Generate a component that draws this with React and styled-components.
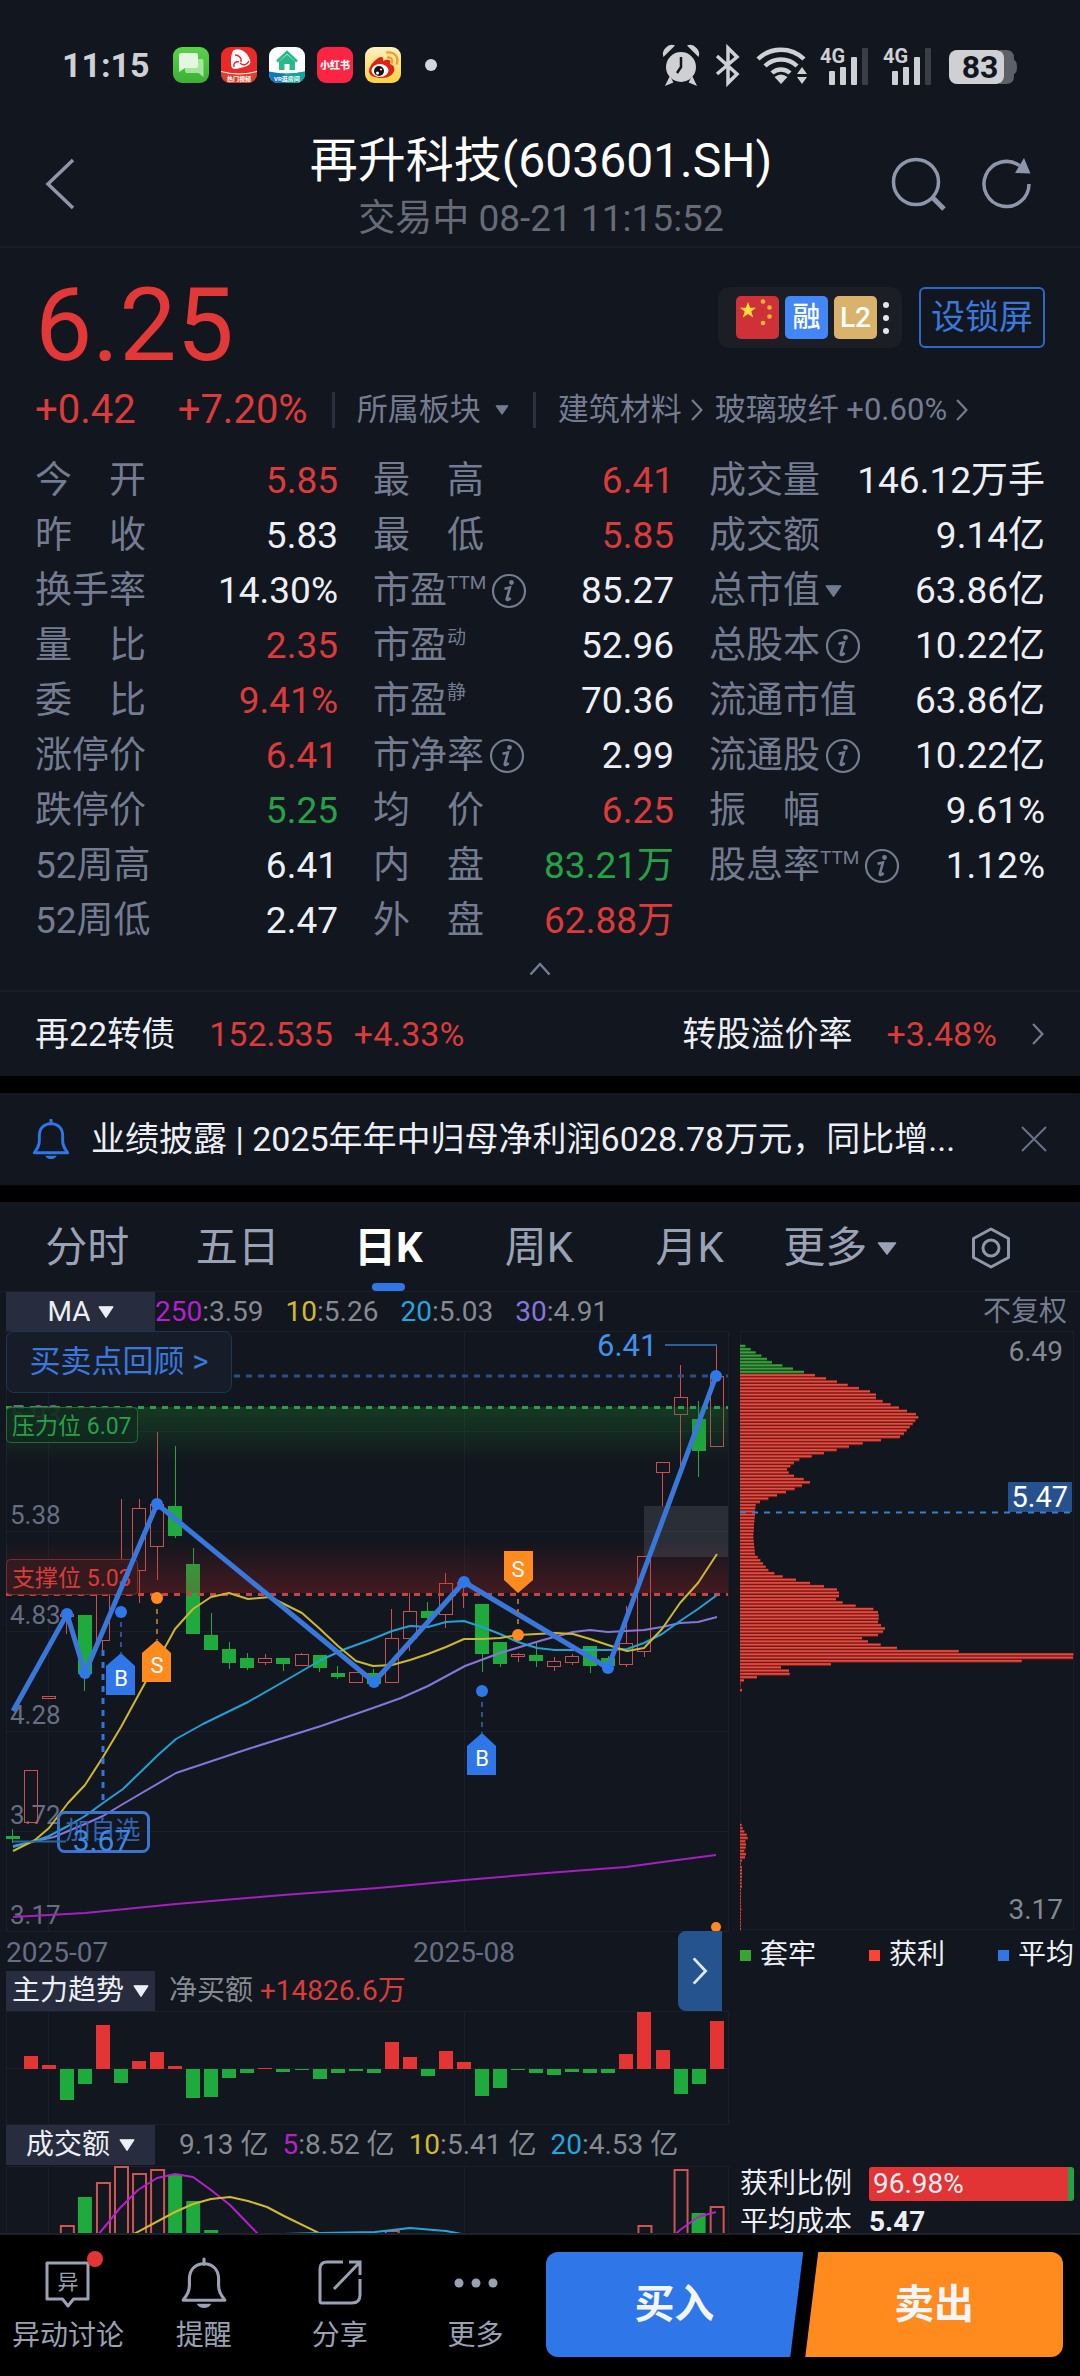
import React from 'react';
import styled, { createGlobalStyle } from 'styled-components';

const red = '#db3b3b';
const green = '#26a146';
const grey = '#737c90';
const white = '#eceff5';
const up = '#c9504f';
const down = '#1faa3e';
const gridLine = '#1b2028';

const GlobalStyle = createGlobalStyle`
    * {
        box-sizing: border-box;
    }
    body {
        margin: 0;
        background: #000000;
        font-family: Roboto, 'Noto Sans CJK SC', sans-serif;
        line-height: 1.2;
        color: ${white};
    }
    button, select {
        margin: 0;
        padding: 0;
        border: 0;
        background: none;
        font: inherit;
        color: inherit;
        cursor: pointer;
    }
    svg {
        display: block;
        flex: none;
    }
    svg text {
        font-family: Roboto, 'Noto Sans CJK SC', sans-serif;
    }
`;

/* ---------- data ---------- */

const quoteColumns = [
    [
        { label: '今　开', value: '5.85', color: red },
        { label: '昨　收', value: '5.83' },
        { label: '换手率', value: '14.30%' },
        { label: '量　比', value: '2.35', color: red },
        { label: '委　比', value: '9.41%', color: red },
        { label: '涨停价', value: '6.41', color: red },
        { label: '跌停价', value: '5.25', color: green },
        { label: '52周高', value: '6.41' },
        { label: '52周低', value: '2.47' },
    ],
    [
        { label: '最　高', value: '6.41', color: red },
        { label: '最　低', value: '5.85', color: red },
        { label: '市盈', sup: 'TTM', info: true, value: '85.27' },
        { label: '市盈', sup: '动', value: '52.96' },
        { label: '市盈', sup: '静', value: '70.36' },
        { label: '市净率', info: true, value: '2.99' },
        { label: '均　价', value: '6.25', color: red },
        { label: '内　盘', value: '83.21万', color: green },
        { label: '外　盘', value: '62.88万', color: red },
    ],
    [
        { label: '成交量', value: '146.12万手' },
        { label: '成交额', value: '9.14亿' },
        { label: '总市值', arrow: true, value: '63.86亿' },
        { label: '总股本', info: true, value: '10.22亿' },
        { label: '流通市值', value: '63.86亿' },
        { label: '流通股', info: true, value: '10.22亿' },
        { label: '振　幅', value: '9.61%' },
        { label: '股息率', sup: 'TTM', info: true, value: '1.12%' },
    ],
];

const averages = [
    { days: '250', value: '3.59', color: '#b51fd0' },
    { days: '10', value: '5.26', color: '#d2bb2a' },
    { days: '20', value: '5.03', color: '#25a5df' },
    { days: '30', value: '4.91', color: '#8576dd' },
];

const amounts = [
    { days: '5', value: '8.52 亿', color: '#b51fd0' },
    { days: '10', value: '5.41 亿', color: '#d2bb2a' },
    { days: '20', value: '4.53 亿', color: '#25a5df' },
];

// [day, rising, body top, body bottom, high, low]
const candles = [
    [0, 0, 1836, 1838, 1829, 1843],
    [1, 1, 1770, 1822, 1770, 1822],
    [2, 1, 1696, 1698, 1696, 1698],
    [3, 1, 1614, 1616, 1612, 1634],
    [4, 0, 1615, 1673, 1615, 1691],
    [5, 1, 1574, 1640, 1574, 1655],
    [6, 1, 1562, 1590, 1499, 1590],
    [7, 1, 1508, 1570, 1499, 1603],
    [8, 1, 1504, 1546, 1432, 1580],
    [9, 0, 1506, 1535, 1446, 1538],
    [10, 0, 1564, 1633, 1548, 1633],
    [11, 0, 1635, 1649, 1613, 1649],
    [12, 0, 1649, 1662, 1642, 1669],
    [13, 0, 1658, 1667, 1653, 1670],
    [14, 1, 1658, 1662, 1654, 1665],
    [15, 0, 1658, 1663, 1658, 1671],
    [16, 1, 1654, 1665, 1653, 1665],
    [17, 0, 1655, 1667, 1655, 1672],
    [18, 0, 1673, 1676, 1666, 1679],
    [19, 1, 1672, 1682, 1672, 1682],
    [20, 0, 1673, 1683, 1669, 1683],
    [21, 1, 1638, 1682, 1609, 1682],
    [22, 1, 1611, 1638, 1593, 1651],
    [23, 0, 1611, 1617, 1602, 1622],
    [24, 1, 1583, 1614, 1573, 1628],
    [25, 1, 1582, 1584, 1580, 1608],
    [26, 0, 1604, 1653, 1604, 1672],
    [27, 0, 1642, 1663, 1642, 1667],
    [28, 1, 1654, 1656, 1653, 1662],
    [29, 0, 1655, 1660, 1642, 1667],
    [30, 1, 1661, 1666, 1657, 1671],
    [31, 1, 1656, 1662, 1654, 1665],
    [32, 0, 1646, 1665, 1646, 1673],
    [33, 0, 1658, 1665, 1656, 1668],
    [34, 1, 1643, 1664, 1606, 1667],
    [35, 1, 1556, 1651, 1556, 1657],
    [36, 1, 1462, 1472, 1462, 1506],
    [37, 1, 1397, 1414, 1365, 1468],
    [38, 0, 1419, 1450, 1401, 1477],
    [39, 1, 1376, 1446, 1345, 1446],
];

const lines = {
    ma10: '13,1851 35,1840 49,1828 68,1803 85,1785 103,1757 121,1727 145,1683 169,1640 175,1629 193,1609 211,1597 229,1593 248,1599 270,1597 302,1613 320,1629 338,1646 356,1661 373,1666 392,1665 410,1660 428,1654 446,1647 464,1639 482,1639 500,1638 518,1635 537,1634 555,1633 573,1634 590,1639 608,1645 627,1651 644,1648 662,1629 680,1603 698,1583 717,1554',
    ma20: '13,1847 35,1841 49,1836 68,1826 85,1816 103,1803 123,1789 158,1755 176,1739 203,1724 248,1702 283,1682 302,1671 321,1660 345,1649 370,1640 392,1631 410,1626 428,1627 446,1622 464,1621 482,1627 500,1634 518,1642 537,1648 555,1650 610,1650 627,1649 644,1643 662,1634 680,1621 698,1609 717,1595',
    ma30: '13,1846 54,1837 85,1824 103,1816 123,1804 176,1773 248,1749 321,1726 373,1708 401,1698 428,1686 465,1666 500,1653 543,1640 573,1632 590,1630 608,1632 644,1630 662,1627 680,1623 698,1622 717,1617',
    ma250: '13,1917 49,1915 85,1913 176,1904 283,1895 378,1888 465,1880 547,1873 626,1867 670,1861 716,1855',
    zigzag: '13,1711 67,1614 85,1673 157,1504 374,1682 464,1582 608,1668 716,1376',
};

const pivots = [[67, 1614], [85, 1673], [157, 1504], [374, 1682], [464, 1582], [608, 1668], [716, 1376]];

const trend = [
    0, 13, 4, -31, -15, 44, -14, 8, 17, 3, -29, -28, -9, -4, 1, -3, -1, -10, -4, -2,
    -4, 27, 12, -7, 18, 7, -27, -19, -1, -4, -6, -3, -4, -4, 15, 57, 19, -25, -15, 48,
];

// [day, rising, top]
const volumes = [
    [3, 1, 2226], [4, 0, 2197], [5, 1, 2183], [6, 1, 2167], [7, 1, 2174], [8, 1, 2170], [9, 0, 2175],
    [10, 0, 2201], [11, 0, 2230], [21, 1, 2231], [34, 1, 2234], [35, 1, 2226], [37, 1, 2170], [38, 0, 2213], [39, 1, 2207],
];

// widths of the cost distribution, in thirds of a unit
const chips = [
    16, 32, 47, 64, 81, 96, 127, 159, 192, 225, 258, 291, 323, 357, 390, 408, 408, 428, 452, 477,
    501, 528, 535, 526, 518, 509, 500, 492, 480, 423, 368, 327, 290, 252, 215, 178, 162, 151, 141, 146,
    162, 191, 210, 186, 164, 138, 111, 85, 60, 47, 46, 45, 45, 44, 43, 42, 42, 41, 40, 40,
    41, 42, 43, 44, 45, 53, 61, 69, 77, 85, 103, 128, 168, 210, 252, 291, 297, 297, 288, 308,
    347, 400, 414, 416, 416, 414, 423, 435, 429, 414, 366, 384, 422, 471, 656, 1000, 999, 845, 273, 123,
    147, 149, 51, 12, 2, 1, 6,
];

const lowChips = [
    5, 8, 13, 20, 23, 16, 18, 17, 13, 18, 15, 6, 3, 6, 6, 6, 6, 5, 5, 6, 3, 3, 3, 3, 3, 3, 4, 3, 3, 3, 3, 3, 3,
];

const dayX = (day) => 12.7 + day * 18.05;

/* ---------- icons ---------- */

const Triangle = ({ width = 15, height = 11, color = 'currentColor' }) => (
    <svg width={width} height={height} viewBox="0 0 15 11" preserveAspectRatio="none">
        <path d="M1 0.8h13L7.5 10.4z" fill={color} stroke={color} strokeWidth="1" strokeLinejoin="round" />
    </svg>
);

const ChevronRight = ({ width = 12, height = 20, stroke = 2, color = 'currentColor' }) => (
    <svg width={width} height={height} viewBox="0 0 12 20" fill="none" stroke={color} strokeWidth={stroke}>
        <path d="M1.5 1l8.5 9-8.5 9" />
    </svg>
);

const InfoIcon = () => (
    <svg width="36" height="36" viewBox="0 0 36 36" fill="none" stroke={grey} strokeWidth="2.2">
        <circle cx="18" cy="18" r="16" />
        <circle cx="20.5" cy="9.5" r="2.4" fill={grey} stroke="none" />
        <path d="M13.5 15.8l5.4-1.3-3.1 11.4c-.4 1.8 1.200 1.6 3.800-.9" strokeWidth="2.6" />
    </svg>
);

const BellIcon = ({ size, color, stroke }) => (
    <svg width={size} height={size} viewBox="0 0 44 48" fill="none" stroke={color} strokeWidth={stroke}>
        <path d="M22 1v5" strokeLinecap="round" />
        <path d="M8 26V20C8 11 14 5.5 22 5.5S36 11 36 20v6c0 6 2 9 6 14.500H2C6 35 8 32 8 26z" strokeLinejoin="round" />
        <path d="M15 44h14c-1.5 3-4 4-7 4s-5.500-1-7-4z" fill={color} stroke="none" />
    </svg>
);

const AppIcons = () => (
    <svg width="230" height="38" viewBox="0 0 230 38">
        <defs>
            <linearGradient id="msg" x1="0" y1="0" x2="0" y2="1">
                <stop offset="0" stopColor="#58d34b" />
                <stop offset="1" stopColor="#3cb034" />
            </linearGradient>
            <linearGradient id="weibo" x1="0" y1="0" x2="0" y2="1">
                <stop offset="0" stopColor="#fdf0c4" />
                <stop offset="1" stopColor="#fbd23c" />
            </linearGradient>
            <clipPath id="hot"><rect x="48" y="1" width="36" height="36" rx="9" /></clipPath>
            <clipPath id="vr"><rect x="96" y="1" width="36" height="36" rx="9" /></clipPath>
        </defs>
        <rect x="0" y="1" width="36" height="36" rx="9" fill="url(#msg)" />
        <path d="M14 13h15q1.500 0 1.500 1.500V31l-5-4H14q-2 0-2-2V15z" fill="#a5e49c" />
        <path d="M8 7h15q2 0 2 2v11q0 2-2 2H12l-6 4V9q0-2 2-2z" fill="#e3f7e0" />

        <g clipPath="url(#hot)">
            <rect x="48" y="1" width="36" height="36" fill="#e92a28" />
            <path d="M46 25q20 6 40 0v14H46z" fill="#d9412c" />
            <path d="M48 25.500q18 5 36 0" fill="none" stroke="#fff" strokeWidth="1" />
            <path d="M61 4c7-3 14 3 16 10 2 5-4 7-10 8-6 2-9 1-9-4 0-4 0-12 3-14z" fill="#fff" />
            <path d="M62 9c4 0 7 3 6 7m8-1c-2 4-6 5-9 2m-6 4c-1-4 2-6 5-5" fill="none" stroke="#e92a28" strokeWidth="1.500" />
            <text x="66" y="35" fontSize="6" fontWeight="700" fill="#fff" textAnchor="middle">热门视频</text>
        </g>

        <g clipPath="url(#vr)">
            <rect x="96" y="1" width="36" height="36" fill="#ffffff" />
            <path d="M94 25q20 5 40 0v14H94z" fill="#1577bd" />
            <path d="M112 28q12 0 22-3v14h-22z" fill="#12a59b" />
            <path d="M104 15.500L114 6l10 9.500" fill="none" stroke="#27b98a" strokeWidth="2.500" />
            <path d="M106 15.500l8-7 8 7V24h-5.500v-6h-5v6H106z" fill="#27b98a" />
            <text x="114" y="35" fontSize="6" fontWeight="700" fill="#fff" textAnchor="middle">VR逛房间</text>
        </g>

        <rect x="144" y="1" width="36" height="36" rx="9" fill="#fb2543" />
        <text x="162" y="23" fontSize="10" fontWeight="900" fill="#fff" textAnchor="middle">小红书</text>

        <rect x="192" y="1" width="36" height="36" rx="9" fill="url(#weibo)" />
        <path d="M196 25c0-6 9-15 13-14 2 1 1 3 1 4 4-2 9-2 7 3 8 2 5 14-8 14-7 0-13-2-13-7z" fill="#dc2318" />
        <ellipse cx="207" cy="24.500" rx="8.500" ry="6.500" fill="#fff" />
        <circle cx="206" cy="25" r="5" fill="#16120f" />
        <circle cx="204.500" cy="27" r="1.500" fill="#fff" />
        <circle cx="208" cy="23.500" r="1" fill="#fff" />
        <path d="M214 6.500c7-1 12 4 10 11M215 11.500c3-.5 5 2 4 5" fill="none" stroke="#f0a02c" strokeWidth="2.400" strokeLinecap="round" />
    </svg>
);

const SystemIcons = () => (
    <svg width="358" height="44" viewBox="0 0 358 44" fill="#cfd0d4">
        <circle cx="19" cy="24" r="15" />
        <path d="M2 12C1 8 6 2 11 3zM36 12c1-4-4-10-9-9zM8 35l-3 6 5-2zM30 35l3 6-5-2z" stroke="#cfd0d4" strokeWidth="2" />
        <path d="M19 14v10l-4 6" fill="none" stroke="#12161e" strokeWidth="2.500" />
        <path d="M55 13l20 18-9 9V5l9 9-20 17" fill="none" stroke="#cfd0d4" strokeWidth="3.500" />
        <g fill="none" stroke="#cfd0d4" strokeWidth="4.500">
            <path d="M96 16a33 33 0 0 1 46 0" />
            <path d="M103 23a23 23 0 0 1 32 0" />
            <path d="M110 30a13 13 0 0 1 18 0" />
        </g>
        <path d="M112.500 34q6.500-5 13 0L119 41z" />
        <path d="M135 31l5-7 5 7zM135 34l5 7 5-7z" />
        {[158, 221].map((x) => (
            <g key={x}>
                <text x={x} y="20" fontSize="20" fontWeight="700">4G</text>
                <rect x={x + 9} y="28" width="6" height="14" rx="1" />
                <rect x={x + 20} y="24" width="6" height="18" rx="1" />
                <rect x={x + 31} y="14" width="6" height="28" rx="1" />
                <rect x={x + 42} y="5" width="6" height="37" rx="1" fill="#3b3e45" />
            </g>
        ))}
        <path d="M338 7h6q8 0 8 8v2q3 1 3 7t-3 7v2q0 8-8 8h-6z" fill="#5d6067" />
        <rect x="287" y="7" width="55" height="34" rx="8" />
        <text x="318" y="35" fontSize="32" fontWeight="700" fill="#12161e" textAnchor="middle">83</text>
    </svg>
);

const FlagIcon = () => (
    <svg width="43" height="43" viewBox="0 0 43 43">
        <rect width="43" height="43" rx="5" fill="#cf3138" />
        <path d="M12 6l2.100 5.800h6L15.300 15.500l1.800 5.900L12 17.900l-5.100 3.500 1.800-5.900L3.900 11.800h6z" fill="#f7dc3b" />
        <g fill="#f2b53a">
            <circle cx="27" cy="5.500" r="2.300" />
            <circle cx="33.500" cy="11.500" r="2.300" />
            <circle cx="33.500" cy="20.500" r="2.300" />
            <circle cx="27" cy="27" r="2.300" />
        </g>
    </svg>
);

/* ---------- charts ---------- */

const Marker = ({ x, y, letter, color, flip }) => (
    <g>
        <path
            d={flip ? `M${x - 14} ${y - 42}h29v29L${x} ${y}l-14-13z` : `M${x} ${y}l14 13v29h-29v-29z`}
            fill={color}
        />
        <text x={x} y={flip ? y - 16 : y + 33} fontSize="22" fill="#ffffff" textAnchor="middle">{letter}</text>
    </g>
);

const KLineChart = () => (
    <Chart viewBox="0 1331 734 640">
        <defs>
            <linearGradient id="press" x1="0" y1="0" x2="0" y2="1">
                <stop offset="0" stopColor="#1a7a2a" stopOpacity="0.36" />
                <stop offset="1" stopColor="#1a7a2a" stopOpacity="0" />
            </linearGradient>
            <linearGradient id="support" x1="0" y1="0" x2="0" y2="1">
                <stop offset="0" stopColor="#b42424" stopOpacity="0" />
                <stop offset="1" stopColor="#b42424" stopOpacity="0.3" />
            </linearGradient>
        </defs>

        <g fill="none" stroke={gridLine} strokeWidth="1">
            <path d="M6 1331.500H728.500V1931.500H6.500V1331" />
            <path d="M6 1431.500H728M6 1531.500H728M6 1631.500H728M6 1731.500H728M6 1831.500H728" />
            <path d="M48.500 1331V1931M464.500 1331V1931" />
        </g>

        <g fontSize="26" fill="#666e83">
            <text x="10" y="1424">5.93</text>
            <text x="10" y="1524">5.38</text>
            <text x="10" y="1624">4.83</text>
            <text x="10" y="1724">4.28</text>
            <text x="10" y="1824">3.72</text>
            <text x="10" y="1924">3.17</text>
        </g>

        <g shapeRendering="crispEdges">
            {candles.map(([day, rising, top, bottom, high, low]) => {
                const x = dayX(day);
                const color = rising ? up : down;
                return (
                    <g key={day}>
                        {high < top && <rect x={x - 0.5} y={high} width="1" height={top - high} fill={color} />}
                        {low > bottom && <rect x={x - 0.5} y={bottom} width="1" height={low - bottom} fill={color} />}
                        <rect
                            x={x - 6.5}
                            y={top}
                            width="13"
                            height={bottom - top}
                            fill={rising ? 'none' : down}
                            stroke={color}
                            strokeWidth="1"
                        />
                    </g>
                );
            })}
        </g>

        <rect x="6" y="1407" width="722" height="56" fill="url(#press)" />
        <rect x="6" y="1540" width="722" height="53" fill="url(#support)" />
        <rect x="644" y="1506" width="84" height="51" fill="#7a7f88" fillOpacity="0.24" />
        <g fill="none" strokeWidth="3" strokeDasharray="6 6">
            <path d="M6 1376H728" stroke="#2b5088" />
            <path d="M6 1407.500H728" stroke="#2f9d47" />
            <path d="M6 1594.500H728" stroke="#c64444" />
        </g>

        <rect x="6.500" y="1407.500" width="131" height="35" rx="4" fill="#12291f" fillOpacity="0.85" stroke="#236b3a" />
        <text x="12" y="1434" fontSize="23" fill={green}>压力位 6.07</text>
        <rect x="6.500" y="1559.500" width="131" height="35" rx="4" fill="#331a20" fillOpacity="0.95" stroke="#7a2c32" />
        <text x="12" y="1586" fontSize="23" fill={red}>支撑位 5.03</text>

        <g fill="none" strokeWidth="2" strokeLinejoin="round">
            <polyline points={lines.ma250} stroke="#a51fc0" />
            <polyline points={lines.ma30} stroke="#8576dd" />
            <polyline points={lines.ma20} stroke="#23a0d6" />
            <polyline points={lines.ma10} stroke="#cdb72f" />
        </g>

        <path d="M103 1650V1804" stroke="#3273dd" strokeWidth="3" strokeDasharray="6 6" />
        <rect x="58.500" y="1812.500" width="90" height="39" rx="6" fill="none" stroke="#3c73cc" strokeWidth="3" />
        <path d="M13 1841.500H66" stroke="#2a6699" strokeWidth="2" />
        <text x="103" y="1839" fontSize="25" fill="#2f63b3" textAnchor="middle">加自选</text>
        <text x="102" y="1851" fontSize="30" fill="#3d88e6" textAnchor="middle">3.67</text>

        <polyline points={lines.zigzag} fill="none" stroke="#3a77da" strokeWidth="5" strokeLinejoin="round" />
        <g fill="#2f78ea">
            {pivots.map(([x, y]) => <circle key={x} cx={x} cy={y} r="6" />)}
            <circle cx="121" cy="1612" r="6" />
            <circle cx="482" cy="1691" r="6" />
        </g>
        <g fill="#ff8a1e">
            <circle cx="157" cy="1598" r="6" />
            <circle cx="518" cy="1635" r="6" />
            <circle cx="716" cy="1927" r="5" />
        </g>
        <g fill="none" strokeWidth="2" strokeDasharray="5 5">
            <path d="M121 1622V1653M482 1702V1733" stroke="#2c5290" />
            <path d="M157 1609V1640M518 1599V1629" stroke="#a36a30" />
        </g>
        <Marker x={121} y={1653} letter="B" color="#2f76e8" />
        <Marker x={157} y={1640} letter="S" color="#ff8a1e" />
        <Marker x={482} y={1733} letter="B" color="#2f76e8" />
        <Marker x={518} y={1593} letter="S" color="#ff8a1e" flip />

        <text x="597" y="1356" fontSize="31" fill="#4190ea">6.41</text>
        <path d="M665 1345H717" stroke="#2c5f96" strokeWidth="2" />

        <g fontSize="28" fill="#666e83">
            <text x="6" y="1962">2025-07</text>
            <text x="464" y="1962" textAnchor="middle">2025-08</text>
        </g>
    </Chart>
);

const TrendChart = () => (
    <Chart viewBox="0 2011 734 114">
        <path
            d="M6.500 2011V2124.500H728.500V2011M6 2011.500H728M6 2068.500H728M48.500 2011V2124M464.500 2011V2124"
            fill="none"
            stroke={gridLine}
        />
        <g shapeRendering="crispEdges">
            {trend.map((size, day) => (
                <rect
                    key={day}
                    x={dayX(day) - 7}
                    y={size > 0 ? 2069 - size : 2069}
                    width="14"
                    height={Math.abs(size)}
                    fill={size > 0 ? '#e43434' : down}
                />
            ))}
        </g>
    </Chart>
);

const AmountChart = () => (
    <Chart viewBox="0 2165 734 114">
        <path d="M6.500 2279V2166.500H728.500V2279M48.500 2166V2279M464.500 2166V2279" fill="none" stroke={gridLine} />
        {volumes.map(([day, rising, top]) => (
            <rect
                key={day}
                x={dayX(day) - (rising ? 6 : 7)}
                y={top}
                width={rising ? 13 : 14}
                height={2279 - top}
                fill={rising ? 'none' : down}
                stroke={rising ? '#cf5553' : 'none'}
                strokeWidth="2"
            />
        ))}
        <g fill="none" strokeWidth="2" strokeLinejoin="round">
            <polyline points="98,2235 120,2208 138,2190 157,2178 175,2174 193,2177 211,2190 230,2205 259,2235" stroke="#b51fd0" />
            <polyline points="675,2235 680,2230 698,2217 716,2212" stroke="#b51fd0" />
            <polyline points="132,2235 175,2212 193,2204 211,2199 230,2197 248,2201 267,2207 284,2216 323,2235" stroke="#d2bb2a" />
            <polyline points="236,2235 284,2234 321,2233 375,2232 410,2228 446,2231 467,2235" stroke="#25a5df" />
        </g>
    </Chart>
);

const ChipChart = () => (
    <Chart viewBox="734 1331 346 600">
        <rect x="740.500" y="1331.500" width="333" height="598" fill="none" stroke={gridLine} />
        {chips.map((size, i) => (
            <g key={i}>
                <rect x="740" y={1344.5 + i * 3.247} width={size / 3} height="3.3" fill={i < 9 ? '#185f1d' : '#8f1a15'} />
                <rect x="740" y={1345 + i * 3.247} width={size / 3} height="1.7" fill={i < 9 ? '#419c43' : '#dc5045'} />
            </g>
        ))}
        {lowChips.map((size, i) => (
            <g key={i}>
                <rect x="740" y={1823.5 + i * 3.247} width={size / 3} height="3.3" fill="#8f1a15" />
                <rect x="740" y={1824 + i * 3.247} width={size / 3} height="1.7" fill="#d24d44" />
            </g>
        ))}
        <text x="1063" y="1361" fontSize="28" fill="#84888f" textAnchor="end">6.49</text>
        <text x="1063" y="1919" fontSize="28" fill="#84888f" textAnchor="end">3.17</text>
        <rect x="1008" y="1482" width="64" height="30" fill="#25528f" />
        <path d="M740 1512.500H1072" stroke="#3a7dcb" strokeWidth="2" strokeDasharray="6 6" />
        <text x="1068" y="1507" fontSize="29" fill="#ffffff" textAnchor="end">5.47</text>
    </Chart>
);

/* ---------- page ---------- */

const Pick = ({ id, name, value, width }) => (
    <Picker htmlFor={id}>
        <PickerSelect id={id} aria-label={name} width={width} defaultValue={value}>
            <option>{value}</option>
        </PickerSelect>
        <Triangle width={16} height={12} />
    </Picker>
);

const QuoteItem = ({ label, sup, info, arrow, value, color }) => (
    <ItemRow>
        <ItemLabel>
            {label}
            {sup && <Sup>{sup}</Sup>}
            {info && <InfoSlot><InfoIcon /></InfoSlot>}
            {arrow && <InfoSlot><Triangle width={17} height={12} /></InfoSlot>}
        </ItemLabel>
        <ItemValue color={color || white}>{value}</ItemValue>
    </ItemRow>
);

export default function App() {
    return (
        <Page>
            <GlobalStyle />
            <StatusBar>
                <StatusSide>
                    <Clock>11:15</Clock>
                    <AppIcons />
                    <Dot />
                </StatusSide>
                <SystemIcons />
            </StatusBar>

            <Header>
                <HeaderButton aria-label="返回">
                    <svg width="32" height="52" viewBox="0 0 32 52" fill="none" stroke="#8d96aa" strokeWidth="3.500">
                        <path d="M30 2L5 26l25 24" />
                    </svg>
                </HeaderButton>
                <Titles>
                    <Title>再升科技(603601.SH)</Title>
                    <SubTitle>交易中 08-21 11:15:52</SubTitle>
                </Titles>
                <HeaderActions>
                    <HeaderButton aria-label="搜索">
                        <svg width="56" height="54" viewBox="0 0 56 54" fill="none" stroke="#8d96aa" strokeWidth="3.500">
                            <circle cx="25" cy="25" r="22.500" />
                            <path d="M41 40l12 12" strokeWidth="5" />
                        </svg>
                    </HeaderButton>
                    <HeaderButton aria-label="刷新">
                        <svg width="52" height="54" viewBox="0 0 52 54" fill="none" stroke="#8d96aa" strokeWidth="3.500">
                            <path d="M48 27a22.500 22.500 0 1 1-9.500-18.400" />
                            <path d="M43 1l6.500 15.500L34 16z" fill="#8d96aa" stroke="none" />
                        </svg>
                    </HeaderButton>
                </HeaderActions>
            </Header>

            <Content>
                <Quote>
                    <PriceRow>
                        <Price>6.25</Price>
                        <Tags>
                            <TagBox>
                                <FlagIcon />
                                <Tag color="#4287f5">融</Tag>
                                <Tag color="#d9b36c">L2</Tag>
                                <svg width="6" height="34" viewBox="0 0 6 34" fill="#e4e6ea">
                                    <circle cx="3" cy="4" r="3" />
                                    <circle cx="3" cy="17" r="3" />
                                    <circle cx="3" cy="30" r="3" />
                                </svg>
                            </TagBox>
                            <LockButton>设锁屏</LockButton>
                        </Tags>
                    </PriceRow>
                    <ChangeRow>
                        <Change>+0.42</Change>
                        <Change>+7.20%</Change>
                        <Divider />
                        <Sector>所属板块<Triangle width={14} height={10} /></Sector>
                        <Divider />
                        <Sector narrow>建筑材料<ChevronRight width={14} height={22} /></Sector>
                        <Sector narrow>玻璃玻纤 +0.60%<ChevronRight width={14} height={22} /></Sector>
                    </ChangeRow>
                    <Items>
                        {quoteColumns.map((column, i) => (
                            <ItemColumn key={i}>
                                {column.map((item, j) => <QuoteItem key={j} {...item} />)}
                            </ItemColumn>
                        ))}
                    </Items>
                    <Collapse aria-label="收起">
                        <svg width="22" height="14" viewBox="0 0 22 14" fill="none" stroke={grey} strokeWidth="2.500">
                            <path d="M1.500 12.500L11 2l9.500 10.500" />
                        </svg>
                    </Collapse>
                </Quote>

                <Bond>
                    <span>再22转债</span>
                    <BondValue>152.535</BondValue>
                    <BondChange>+4.33%</BondChange>
                    <Premium>转股溢价率</Premium>
                    <BondValue>+3.48%</BondValue>
                    <BondArrow><ChevronRight width={14} height={22} color={grey} /></BondArrow>
                </Bond>

                <News>
                    <BellIcon size={40} color="#2f76e8" stroke={3.5} />
                    <NewsText>业绩披露 | 2025年年中归母净利润6028.78万元，同比增...</NewsText>
                    <IconButton aria-label="关闭">
                        <svg width="26" height="26" viewBox="0 0 26 26" stroke="#67728c" strokeWidth="2">
                            <path d="M1 1l24 24M25 1L1 25" />
                        </svg>
                    </IconButton>
                </News>

                <Tabs>
                    <Tab>分时</Tab>
                    <Tab>五日</Tab>
                    <Tab active>日K</Tab>
                    <Tab>周K</Tab>
                    <Tab>月K</Tab>
                    <Tab>更多<Triangle width={20} height={13} /></Tab>
                    <Tab aria-label="设置">
                        <svg width="42" height="42" viewBox="0 0 42 42" fill="none" stroke="#8f97aa" strokeWidth="3">
                            <path d="M21 2l17.500 9.500v19L21 40 3.500 30.500v-19z" strokeLinejoin="round" />
                            <circle cx="21" cy="21" r="8" />
                        </svg>
                    </Tab>
                </Tabs>

                <Legend>
                    <Pick id="main-index" name="主图指标" value="MA" width={42} />
                    <Averages>
                        {averages.map(({ days, value, color }) => (
                            <span key={days}><Days color={color}>{days}</Days>:{value}</span>
                        ))}
                    </Averages>
                    <Adjust>不复权</Adjust>
                </Legend>

                <Panels>
                    <LeftPanel>
                        <KLineChart />
                        <Review>买卖点回顾 &gt;</Review>
                        <Expand aria-label="展开">
                            <ChevronRight width={18} height={28} stroke={2} color="#dfe8f5" />
                        </Expand>
                        <SubLegend>
                            <Pick id="sub-index-1" name="副图指标一" value="主力趋势" width={113} />
                            <NetBuy>净买额 <Amount>+14826.6万</Amount></NetBuy>
                        </SubLegend>
                        <TrendChart />
                        <SubLegend>
                            <Pick id="sub-index-2" name="副图指标二" value="成交额" width={85} />
                            <Amounts>
                                <span>9.13 亿</span>
                                {amounts.map(({ days, value, color }) => (
                                    <span key={days}><Days color={color}>{days}</Days>:{value}</span>
                                ))}
                            </Amounts>
                        </SubLegend>
                        <AmountChart />
                    </LeftPanel>
                    <div>
                        <ChipChart />
                        <ChipLegend>
                            <Key color="#37a532">套牢</Key>
                            <Key color="#fd4433">获利</Key>
                            <Key color="#2f76e8">平均</Key>
                        </ChipLegend>
                        <CostTable>
                            <tbody>
                                <tr>
                                    <th scope="row">获利比例</th>
                                    <td><Ratio>96.98%</Ratio></td>
                                </tr>
                                <tr>
                                    <th scope="row">平均成本</th>
                                    <td><b>5.47</b></td>
                                </tr>
                            </tbody>
                        </CostTable>
                    </div>
                </Panels>
            </Content>

            <BottomBar>
                <NavItems>
                    <NavItem>
                        <svg width="60" height="50" viewBox="0 0 60 50" fill="none" stroke="#99a1b3" strokeWidth="3">
                            <path d="M9 5h41v36H35.500L30 48l-5.500-7H9z" strokeLinejoin="round" />
                            <text x="30" y="31" fontSize="21" fill="#99a1b3" stroke="none" textAnchor="middle">异</text>
                            <circle cx="57" cy="1" r="8" fill="#e43434" stroke="none" />
                        </svg>
                        异动讨论
                    </NavItem>
                    <NavItem>
                        <BellIcon size={50} color="#99a1b3" stroke={3} />
                        提醒
                    </NavItem>
                    <NavItem>
                        <svg width="48" height="50" viewBox="0 0 48 50" fill="none" stroke="#99a1b3" strokeWidth="3">
                            <path d="M27 4H11q-7 0-7 7v32q0 2 2 2h30q8 0 8-8V21" />
                            <path d="M18 31L43 5M33 4h11v13" />
                        </svg>
                        分享
                    </NavItem>
                    <NavItem>
                        <svg width="44" height="50" viewBox="0 0 44 50" fill="#99a1b3">
                            <circle cx="5" cy="25" r="4.500" />
                            <circle cx="22" cy="25" r="4.500" />
                            <circle cx="39" cy="25" r="4.500" />
                        </svg>
                        更多
                    </NavItem>
                </NavItems>
                <BuyButton>买入</BuyButton>
                <SellButton>卖出</SellButton>
            </BottomBar>
        </Page>
    );
}

const Page = styled.div`
    display: flex;
    flex-direction: column;
    height: 100vh;
    overflow: hidden;
    background: #000000;
`;

const StatusBar = styled.div`
    display: flex;
    align-items: center;
    justify-content: space-between;
    flex: none;
    height: 130px;
    padding: 0 60px 0 62px;
    background: #12161e;
`;

const StatusSide = styled.div`
    display: flex;
    align-items: center;
`;

const Clock = styled.span`
    width: 111px;
    font-size: 34px;
    font-weight: 700;
    color: #cfd0d4;
`;

const Dot = styled.i`
    width: 12px;
    height: 12px;
    margin-left: 22px;
    border-radius: 50%;
    background: #d5d6da;
`;

const Header = styled.header`
    display: grid;
    grid-template-columns: 150px 1fr 150px;
    flex: none;
    padding: 0 41px 0 43px;
    border-bottom: 2px solid #191e26;
    background: #12161e;
`;

const IconButton = styled.button`
    display: flex;
    align-items: center;
`;

const HeaderButton = styled(IconButton)`
    height: 108px;
`;

const Titles = styled.div`
    text-align: center;
`;

const Title = styled.h1`
    margin: 0;
    font-size: 48px;
    font-weight: 400;
    line-height: 62px;
    color: #ffffff;
    white-space: nowrap;
`;

const SubTitle = styled.p`
    margin: 0;
    font-size: 37px;
    line-height: 54px;
    color: #666b77;
`;

const HeaderActions = styled.div`
    display: flex;
    justify-content: flex-end;
    gap: 34px;
    margin-right: 6px;
`;

const Content = styled.main`
    flex: 1;
    min-height: 0;
    overflow: hidden auto;
    scrollbar-width: none;
    border-bottom: 2px solid #1d2229;
`;

const Quote = styled.section`
    padding: 25px 35px 0;
    background: #12161e;
`;

const PriceRow = styled.div`
    display: flex;
    justify-content: space-between;
    align-items: flex-start;
`;

const Price = styled.span`
    font-size: 102px;
    line-height: 104px;
    color: #e23838;
`;

const Tags = styled.div`
    display: flex;
    gap: 17px;
    margin-top: 14px;
`;

const TagBox = styled.div`
    display: flex;
    align-items: center;
    gap: 6px;
    height: 61px;
    padding: 0 13px 0 18px;
    border-radius: 12px;
    background: #1b1e25;
`;

const Tag = styled.span`
    width: 43px;
    border-radius: 5px;
    background: ${props => props.color};
    font-size: 28px;
    font-weight: 500;
    line-height: 43px;
    text-align: center;
    color: #ffffff;
`;

const LockButton = styled.button`
    height: 61px;
    padding: 0 10px;
    border: 2px solid #2f68c4;
    border-radius: 6px;
    font-size: 34px;
    color: #3a78dc;
`;

const ChangeRow = styled.div`
    display: flex;
    align-items: center;
    height: 66px;
    white-space: nowrap;
`;

const Change = styled.span`
    margin-right: 24px;
    font-size: 40px;
    color: ${red};

    & + & {
        margin-left: 18px;
    }
`;

const Divider = styled.i`
    width: 3px;
    height: 36px;
    background: #2a303d;
`;

const Sector = styled.button`
    display: flex;
    align-items: center;
    gap: ${props => props.narrow ? '8px' : '14px'};
    margin-right: ${props => props.narrow ? '11px' : '24px'};
    font-size: 31px;
    color: ${grey};

    ${Divider} + & {
        margin-left: 22px;
    }
`;

const Items = styled.div`
    display: grid;
    grid-template-columns: 303fr 301fr 336fr;
    gap: 35px;
    padding-top: 10px;
`;

const ItemColumn = styled.dl`
    margin: 0;
`;

const ItemRow = styled.div`
    display: flex;
    justify-content: space-between;
    height: 55px;
    font-size: 37px;
    line-height: 55px;
    white-space: nowrap;
`;

const ItemLabel = styled.dt`
    display: flex;
    color: ${grey};
`;

const Sup = styled.sup`
    font-size: 19px;
    line-height: 40px;
    vertical-align: baseline;
`;

const InfoSlot = styled.span`
    display: flex;
    align-items: center;
    margin-left: 5px;
`;

const ItemValue = styled.dd`
    margin: 0;
    color: ${props => props.color};
`;

const Collapse = styled.button`
    display: flex;
    align-items: center;
    justify-content: center;
    width: 100%;
    height: 42px;
`;

const Bond = styled.section`
    display: flex;
    align-items: center;
    height: 86px;
    padding: 0 35px;
    border-top: 2px solid #191e26;
    background: #12161e;
    font-size: 34px;
`;

const BondValue = styled.span`
    margin-left: 34px;
    color: ${red};
`;

const BondChange = styled.span`
    margin-left: 21px;
    color: ${red};
`;

const Premium = styled.span`
    margin-left: auto;
`;

const BondArrow = styled.span`
    margin-left: 34px;
`;

const News = styled.section`
    display: flex;
    align-items: center;
    height: 92px;
    margin: 17px 0;
    padding: 0 33px 0 31px;
    background: #12161e;
`;

const NewsText = styled.p`
    flex: 1;
    margin: 0 20px;
    font-size: 34px;
    white-space: nowrap;
`;

const Tabs = styled.nav`
    display: grid;
    grid-template-columns: repeat(7, 1fr);
    height: 89px;
    padding: 0 14px 0 12px;
    background: #12161e;
`;

const Tab = styled.button`
    display: flex;
    align-items: center;
    justify-content: center;
    gap: 10px;
    position: relative;
    padding-top: 3px;
    font-size: 42px;
    font-weight: ${props => props.active ? 700 : 400};
    color: ${props => props.active ? '#ffffff' : '#9aa2b6'};

    &::after {
        content: '';
        display: ${props => props.active ? 'block' : 'none'};
        position: absolute;
        bottom: 0;
        width: 33px;
        height: 8px;
        border-radius: 4px;
        background: #2f76e8;
    }
`;

const Legend = styled.div`
    display: flex;
    height: 40px;
    padding: 0 13px 0 6px;
    border-top: 1px solid ${gridLine};
    background: #12161e;
    font-size: 28px;
    line-height: 40px;
    color: #868a92;
`;

const Picker = styled.label`
    display: flex;
    align-items: center;
    justify-content: center;
    gap: 8px;
    width: 149px;
    background: #272d3e;
    font-size: 28px;
    color: ${white};
`;

const PickerSelect = styled.select`
    appearance: none;
    width: ${props => props.width}px;
    height: 40px;
    outline: none;
`;

const Averages = styled.div`
    display: flex;
    gap: 22px;
    flex: 1;
`;

const Days = styled.span`
    color: ${props => props.color};
`;

const Adjust = styled.button`
    color: ${grey};
`;

const Panels = styled.div`
    display: grid;
    grid-template-columns: 734fr 346fr;
    background: #12161e;
`;

const LeftPanel = styled.div`
    position: relative;
`;

const Chart = styled.svg`
    width: 100%;
    height: auto;
    overflow: visible;
`;

const Review = styled.button`
    position: absolute;
    top: 0;
    left: 6px;
    width: 226px;
    height: 62px;
    border: 1px solid #1f3556;
    border-radius: 8px;
    background: #161d29;
    font-size: 31px;
    color: #3a78dc;
`;

const Expand = styled.button`
    display: flex;
    align-items: center;
    justify-content: center;
    position: absolute;
    top: 600px;
    right: 12px;
    width: 44px;
    height: 80px;
    border-radius: 8px 0 0 8px;
    background: #24538d;
`;

const SubLegend = styled.div`
    display: flex;
    height: 40px;
    padding-left: 6px;
    font-size: 28px;
    line-height: 40px;
    color: #868a92;
`;

const NetBuy = styled.span`
    margin-left: 14px;
`;

const Amount = styled.span`
    color: ${red};
`;

const Amounts = styled.div`
    display: flex;
    gap: 14px;
    margin-left: 24px;
`;

const ChipLegend = styled.div`
    display: flex;
    justify-content: space-between;
    padding: 0 6px;
    font-size: 28px;
    line-height: 48px;
`;

const Key = styled.span`
    display: flex;
    align-items: center;
    gap: 9px;

    &::before {
        content: '';
        width: 11px;
        height: 11px;
        background: ${props => props.color};
    }
`;

const CostTable = styled.table`
    width: 100%;
    margin-top: 186px;
    padding: 0 6px;
    border-spacing: 0;
    font-size: 28px;
    line-height: 34px;

    th, td {
        height: 38px;
        padding: 0;
        font-weight: 400;
        text-align: left;
    }
    th {
        width: 129px;
    }
`;

const Ratio = styled.div`
    padding-left: 4px;
    border-right: 6px solid #26a146;
    border-radius: 3px;
    background: #e23434;
`;

const BottomBar = styled.footer`
    display: flex;
    flex: none;
    gap: 2px;
    padding: 17px 17px 19px 0;
`;

const NavItems = styled.nav`
    display: grid;
    grid-template-columns: repeat(4, 1fr);
    flex: none;
    width: calc(50% + 12px);
`;

const NavItem = styled.button`
    display: flex;
    flex-direction: column;
    align-items: center;
    justify-content: space-between;
    padding: 6px 0 4px;
    font-size: 28px;
    line-height: 34px;
    color: #99a1b3;
    white-space: nowrap;

    svg {
        overflow: visible;
    }
`;

const TradeButton = styled.button`
    flex: 1;
    height: 105px;
    font-size: 40px;
    font-weight: 700;
    color: #f2f5fa;
`;

const BuyButton = styled(TradeButton)`
    border-radius: 12px 0 0 12px;
    background: #2f76e8;
    clip-path: polygon(0 0, 100% 0, calc(100% - 13px) 100%, 0 100%);
`;

const SellButton = styled(TradeButton)`
    border-radius: 0 12px 12px 0;
    background: #ff8a1e;
    clip-path: polygon(13px 0, 100% 0, 100% 100%, 0 100%);
`;
